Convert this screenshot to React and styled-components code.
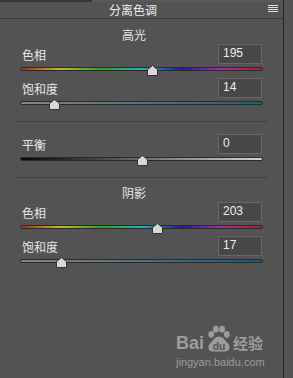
import React from 'react';
import styled, { createGlobalStyle } from 'styled-components';

const GlobalStyle = createGlobalStyle`
  html, body {
    margin: 0;
    padding: 0;
    background: #535353;
  }
  body {
    font-family: "Noto Sans CJK SC", "Liberation Sans", sans-serif;
    color: #e6e6e6;
  }
`;

const HUE_GRADIENT = `linear-gradient(to right,
  hsl(0, 65%, 42%), hsl(60, 65%, 45%), hsl(120, 60%, 40%),
  hsl(180, 65%, 42%), hsl(240, 70%, 38%), hsl(300, 60%, 42%), hsl(360, 65%, 40%))`;

const Page = styled.div`
  display: flex;
  height: 378px;
  overflow: hidden;
`;

const Panel = styled.div`
  position: relative;
  width: 284px;
  box-sizing: border-box;
  border-right: 1px solid #262626;
  display: flex;
  flex-direction: column;
`;

const Header = styled.div`
  display: flex;
  height: 18px;
  border-bottom: 1px solid #3b3b3b;
`;

const Tab = styled.div`
  width: 92px;
  border-top: 2px solid #383838;
`;

const ActiveTab = styled.div`
  flex: 1;
  display: flex;
  align-items: center;
  justify-content: space-between;
  padding: 0 5px 0 17px;
  border-top: 2px solid #595959;
  font-size: 12px;
  line-height: 16px;
  color: #ececec;
`;

const MenuIcon = styled.div`
  display: flex;
  flex-direction: column;
  gap: 1px;
  margin-top: -3px;

  span {
    display: block;
    width: 10px;
    height: 1px;
    background: #e0e0e0;
  }
`;

const Body = styled.div`
  padding: 0 20px;
  display: flex;
  flex-direction: column;
`;

const SectionTitle = styled.div`
  padding-top: ${p => (p.$first ? 8 : 7)}px;
  height: 17px;
  line-height: 16px;
  font-size: 12px;
  text-align: center;
  padding-right: 15px;
  color: #e6e6e6;
`;

const Row = styled.div`
  display: flex;
  align-items: center;
  justify-content: space-between;
  height: 20px;
`;

const Label = styled.span`
  font-size: 12px;
  padding-left: 2px;
`;

const Value = styled.div`
  width: 44px;
  height: 20px;
  box-sizing: border-box;
  margin-right: 1px;
  border: 1px solid #676767;
  background: #484848;
  padding-left: 4px;
  font-family: "Liberation Sans", sans-serif;
  font-size: 12px;
  line-height: 17px;
  color: #ececec;
`;

const SliderWrap = styled.div`
  position: relative;
  margin-top: 3px;
  height: 11px;
`;

const Track = styled.div`
  height: 4px;
  box-sizing: border-box;
  border: 1px solid #2a2a2a;
  border-radius: 2px;
  background: ${p => p.$bg};
`;

const Thumb = styled.svg`
  position: absolute;
  top: -2px;
  width: 11px;
  height: 11px;
  margin-left: -5px;
`;

const Divider = styled.div`
  margin: 9px -5px ${p => (p.$tight ? 0 : 12)}px;
  height: 1px;
  background: #424242;
`;

const Watermark = styled.div`
  position: absolute;
  left: 176px;
  top: 324px;
  display: flex;
  flex-direction: column;
  color: #a4a4a4;
  opacity: 0.9;
`;

const Brand = styled.div`
  display: flex;
  align-items: flex-end;
  height: 29px;
`;

const BrandWord = styled.span`
  font-family: "Liberation Sans", sans-serif;
  font-weight: bold;
  font-size: 18px;
  line-height: 18px;
  padding-bottom: 1px;
`;

const BrandCn = styled.span`
  font-size: 15px;
  line-height: 18px;
  font-weight: bold;
  padding-bottom: 1px;
`;

const Site = styled.span`
  font-family: "Liberation Sans", sans-serif;
  font-size: 11px;
  line-height: 12px;
  margin-top: 3px;
`;

const Paw = () => (
  <svg width="29" height="28" viewBox="0 0 28 27">
    <ellipse cx="7" cy="9" rx="2.8" ry="3.3" fill="#a4a4a4" />
    <ellipse cx="11.5" cy="4" rx="2.8" ry="3.3" fill="#a4a4a4" />
    <ellipse cx="17.5" cy="4" rx="2.8" ry="3.3" fill="#a4a4a4" />
    <ellipse cx="22" cy="9" rx="2.8" ry="3.3" fill="#a4a4a4" />
    <path
      d="M14.5 11 C10 11 9 15 6 17.5 C3.5 19.5 3.5 25 8 25.5 L21 25.5 C25.5 25 25.5 19.5 23 17.5 C20 15 19 11 14.5 11 Z"
      fill="#a4a4a4"
    />
    <text
      x="14.5"
      y="24"
      textAnchor="middle"
      fontFamily="Liberation Sans, sans-serif"
      fontWeight="bold"
      fontSize="10"
      fill="#535353"
    >
      du
    </text>
  </svg>
);

const Slider = ({ bg, pct }) => (
  <SliderWrap>
    <Track $bg={bg} />
    <Thumb viewBox="0 0 11 11" style={{ left: `${pct}%` }}>
      <polygon
        points="5.5,0.5 10.5,4.5 10.5,10.5 0.5,10.5 0.5,4.5"
        fill="#d8d8d8"
        stroke="#333"
        strokeWidth="1"
      />
    </Thumb>
  </SliderWrap>
);

const Control = ({ label, value, bg, pct }) => (
  <>
    <Row>
      <Label>{label}</Label>
      <Value>{value}</Value>
    </Row>
    <Slider bg={bg} pct={pct} />
  </>
);

const satGradient = hue =>
  `linear-gradient(to right, #858585, hsl(${hue}, 62%, 30%))`;

export default function App() {
  return (
    <Page>
      <GlobalStyle />
      <Panel>
        <Header>
          <Tab />
          <ActiveTab>
            <span>分离色调</span>
            <MenuIcon>
              <span />
              <span />
              <span />
              <span />
            </MenuIcon>
          </ActiveTab>
        </Header>
        <Body>
          <SectionTitle $first>高光</SectionTitle>
          <Control label="色相" value="195" bg={HUE_GRADIENT} pct={(195 / 360) * 100} />
          <Control label="饱和度" value="14" bg={satGradient(198)} pct={14} />
          <Divider />
          <Control
            label="平衡"
            value="0"
            bg="linear-gradient(to right, #050505, #d4d4d4)"
            pct={50}
          />
          <Divider $tight />
          <SectionTitle>阴影</SectionTitle>
          <Control label="色相" value="203" bg={HUE_GRADIENT} pct={(203 / 360) * 100} />
          <Control label="饱和度" value="17" bg={satGradient(203)} pct={17} />
        </Body>
        <Watermark>
          <Brand>
            <BrandWord>Bai</BrandWord>
            <Paw />
            <BrandCn>经验</BrandCn>
          </Brand>
          <Site>jingyan.baidu.com</Site>
        </Watermark>
      </Panel>
    </Page>
  );
}
